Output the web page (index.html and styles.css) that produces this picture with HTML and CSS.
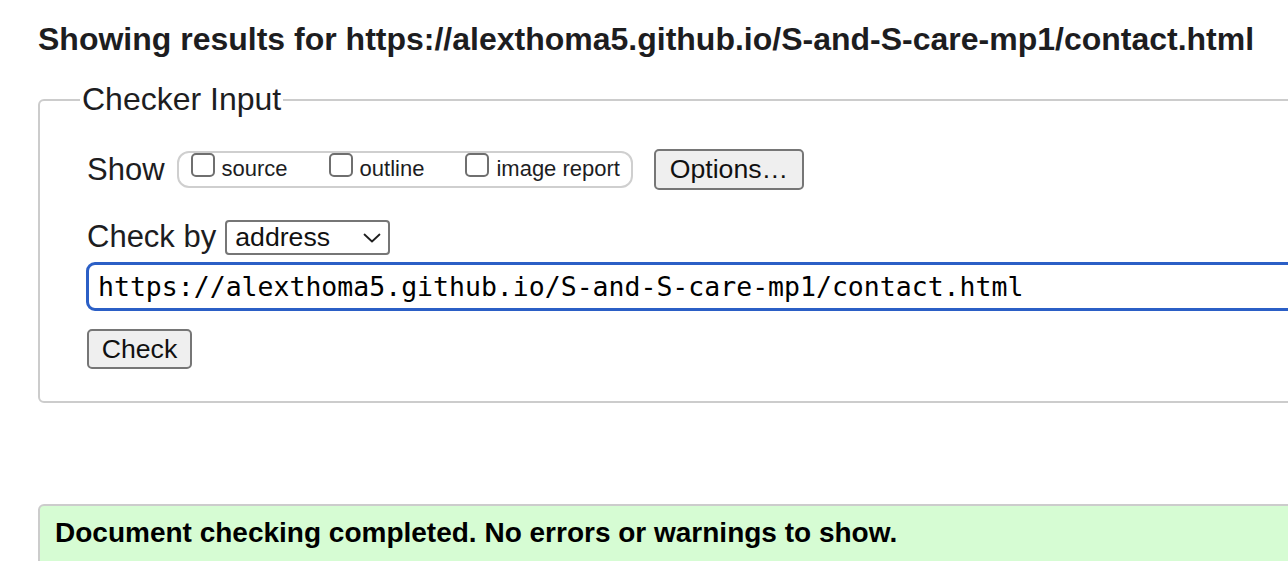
FILE: index.html
```html
<!DOCTYPE html>
<html lang="en">
<head>
<meta charset="utf-8">
<title>Nu Html Checker</title>
<link rel="stylesheet" href="styles.css">
</head>
<body>
<div class="page">
  <h2 class="results-title">Showing results for https://alexthoma5.github.io/S-and-S-care-mp1/contact.html</h2>
  <form class="checker">
    <fieldset class="checker-input">
      <legend class="checker-legend">Checker Input</legend>
      <div class="row row-show">
        <span class="row-label">Show</span>
        <span class="pill">
          <label class="opt"><input class="cb" type="checkbox"><span class="opt-text">source</span></label>
          <label class="opt"><input class="cb" type="checkbox"><span class="opt-text">outline</span></label>
          <label class="opt"><input class="cb" type="checkbox"><span class="opt-text">image report</span></label>
        </span>
        <button class="btn btn-options" type="button">Options…</button>
      </div>
      <div class="row row-by">
        <span class="row-label">Check by</span>
        <span class="select-wrap">
          <select class="select"><option>address</option></select>
          <svg class="chev" width="18" height="10" viewBox="0 0 18 10"><path d="M1.5 1.5 L9 8.5 L16.5 1.5" fill="none" stroke="#1e1e1e" stroke-width="1.8" stroke-linecap="round" stroke-linejoin="round"/></svg>
        </span>
      </div>
      <div class="row row-url">
        <input class="url" type="text" value="https://alexthoma5.github.io/S-and-S-care-mp1/contact.html">
      </div>
      <div class="row row-submit">
        <button class="btn btn-check" type="button">Check</button>
      </div>
    </fieldset>
  </form>
  <div class="success">Document checking completed. No errors or warnings to show.</div>
</div>
</body>
</html>
```
FILE: styles.css
```css
html, body {
  margin: 0;
  padding: 0;
  overflow: hidden;
  background: #fff;
}

body {
  font-family: "Liberation Sans", Arial, sans-serif;
  color: #1f1f1f;
}

.page {
  width: 1500px;
  padding: 21px 0 0 38px;
  box-sizing: border-box;
}

.results-title {
  margin: 0;
  font-size: 32px;
  font-weight: bold;
  line-height: normal;
  color: #1d1d1f;
}

.checker {
  margin: 23px 0 0 0;
}

.checker-input {
  margin: 0;
  border: 2px solid #cccccc;
  border-radius: 6px;
  padding: 31px 0 32px 47px;
  min-width: 0;
}

.checker-legend {
  font-size: 32px;
  line-height: normal;
  padding: 0 2px;
  margin-left: -7px;
  color: #1d1d1f;
}

.row {
  display: flex;
  align-items: center;
}

.row-label {
  font-size: 31px;
  line-height: 36px;
  color: #1d1d1f;
}

.row-show {
  height: 41px;
}

.pill {
  display: flex;
  align-items: flex-end;
  box-sizing: border-box;
  height: 37px;
  margin-left: 12px;
  padding: 0 11px 6px 12px;
  border: 2px solid #cfcfcf;
  border-radius: 12px;
}

.opt {
  display: flex;
  align-items: flex-end;
  margin-right: 41px;
}

.opt:last-child {
  margin-right: 0;
}

.cb {
  appearance: none;
  -webkit-appearance: none;
  width: 24px;
  height: 24px;
  margin: 0 7px 3px 0;
  box-sizing: border-box;
  border: 2px solid #6f6f6f;
  border-radius: 5px;
  background: #fff;
}

.opt-text {
  font-size: 22px;
  line-height: 22px;
  color: #1d1d1f;
}

.btn {
  font-family: "Liberation Sans", Arial, sans-serif;
  font-size: 26.67px;
  line-height: 31px;
  color: #111;
  background: #efefef;
  border: 2px solid #767676;
  border-radius: 5px;
  box-sizing: border-box;
  padding: 0 12px;
}

.btn-options {
  margin-left: 21px;
  height: 41px;
  width: 150px;
}

.row-by {
  margin-top: 29px;
  height: 36px;
}

.select-wrap {
  position: relative;
  display: inline-block;
  margin-left: 9px;
}

.select {
  appearance: none;
  -webkit-appearance: none;
  font-family: "Liberation Sans", Arial, sans-serif;
  font-size: 26.67px;
  line-height: 31px;
  color: #111;
  width: 165px;
  height: 35px;
  box-sizing: border-box;
  padding: 0 0 0 8px;
  border: 2px solid #767676;
  border-radius: 4px;
  background: #fff;
  display: block;
}

.chev {
  position: absolute;
  left: 138px;
  top: 13px;
  pointer-events: none;
}

.row-url {
  margin-top: 7px;
  margin-left: -1px;
}

.url {
  flex: 1;
  box-sizing: border-box;
  height: 49px;
  border: 3px solid #2b5fc6;
  border-radius: 9px;
  padding: 0 0 0 9px;
  font-family: "DejaVu Sans Mono", "Liberation Mono", monospace;
  font-size: 26.5px;
  color: #000;
  background: #fff;
  outline: none;
}

.row-submit {
  margin-top: 18px;
}

.btn-check {
  height: 40px;
  width: 105px;
}

.success {
  margin-top: 101px;
  border: 2px solid #cccccc;
  border-radius: 6px;
  background: #d6fcd3;
  padding: 11px 15px 20px 15px;
  font-size: 28px;
  line-height: 32px;
  font-weight: bold;
  color: #000;
}
```
